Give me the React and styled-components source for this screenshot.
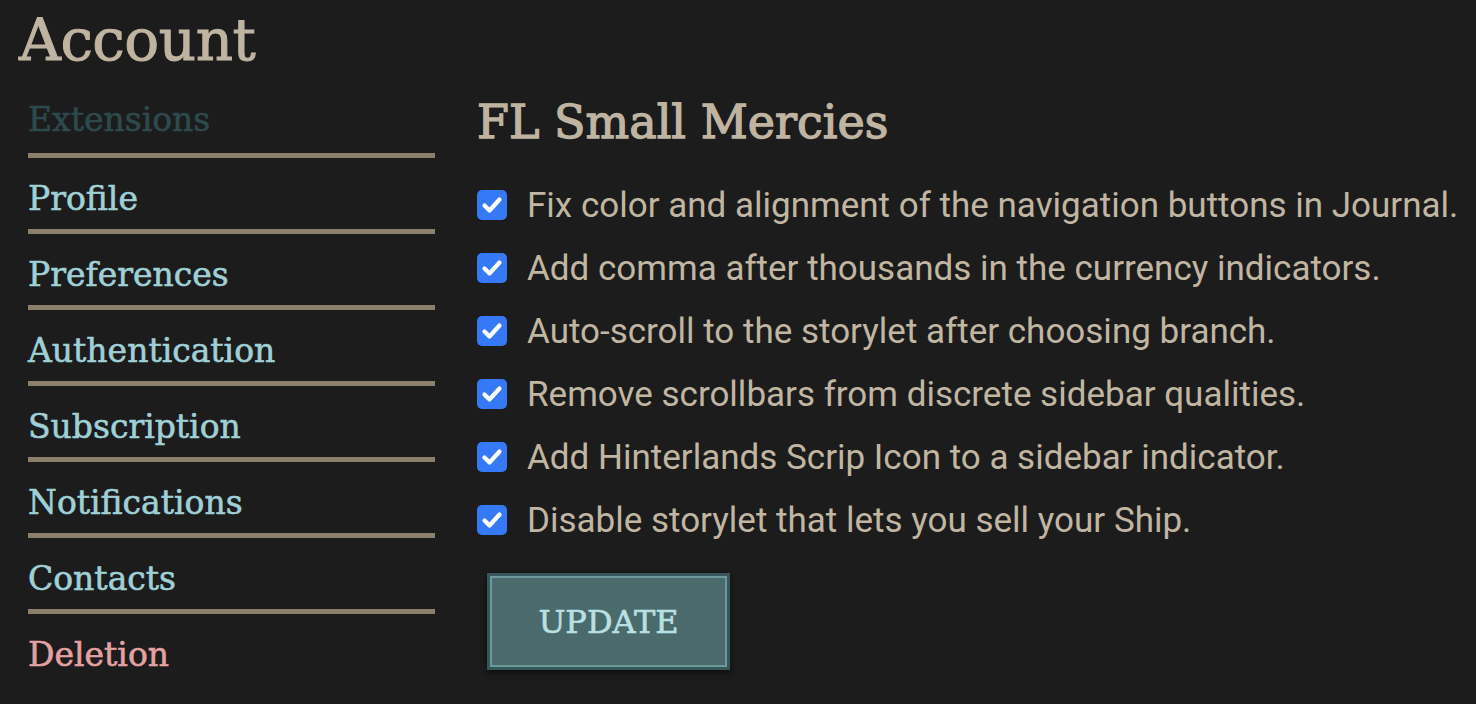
import React from "react";
import styled, { createGlobalStyle } from "styled-components";

const GlobalStyle = createGlobalStyle`
  body {
    margin: 0;
    background: #1c1c1c;
    font-family: "Roboto", "Liberation Sans", sans-serif;
  }
`;

const navItems = [
  { label: "Extensions", kind: "active" },
  { label: "Profile" },
  { label: "Preferences" },
  { label: "Authentication" },
  { label: "Subscription" },
  { label: "Notifications" },
  { label: "Contacts" },
  { label: "Deletion", kind: "danger" },
];

const options = [
  "Fix color and alignment of the navigation buttons in Journal.",
  "Add comma after thousands in the currency indicators.",
  "Auto-scroll to the storylet after choosing branch.",
  "Remove scrollbars from discrete sidebar qualities.",
  "Add Hinterlands Scrip Icon to a sidebar indicator.",
  "Disable storylet that lets you sell your Ship.",
];

const App = () => {
  return (
    <Page>
      <GlobalStyle />
      <Title>Account</Title>
      <Columns>
        <Sidebar>
          {navItems.map((item, i) => (
            <NavItem key={item.label} $kind={item.kind} $last={i === navItems.length - 1}>
              {item.label}
            </NavItem>
          ))}
        </Sidebar>
        <Main>
          <Heading>FL Small Mercies</Heading>
          <OptionList>
            {options.map((text) => (
              <Option key={text}>
                <CheckBox>
                  <svg width="30" height="30" viewBox="0 0 30 30">
                    <path d="M7.5 15.5 L12.5 20.5 L22.5 9.5" fill="none" stroke="#fff" strokeWidth="4.2" strokeLinecap="round" strokeLinejoin="round" />
                  </svg>
                </CheckBox>
                <OptionText>{text}</OptionText>
              </Option>
            ))}
          </OptionList>
          <UpdateButton>UPDATE</UpdateButton>
        </Main>
      </Columns>
    </Page>
  );
};

const Page = styled.div`
  padding: 4px 0 0 19px;
  color: #bfb4a1;
`;

const Title = styled.h1`
  margin: 0;
  font-family: "DejaVu Serif", "Liberation Serif", serif;
  font-weight: 400;
  font-size: 58px;
  line-height: 72px;
  color: #bfb4a1;
  letter-spacing: -0.5px;
  -webkit-text-stroke: 1px #bfb4a1;
`;

const Columns = styled.div`
  display: flex;
  gap: 42px;
  padding-left: 9px;
`;

const Sidebar = styled.nav`
  width: 407px;
  display: flex;
  flex-direction: column;
  padding-top: 24px;
`;

const navColor = (p) =>
  p.$kind === "active" ? "#2d4a4d" : p.$kind === "danger" ? "#e3a1a1" : "#9fd0d7";

const NavItem = styled.div`
  font-family: "DejaVu Serif", "Liberation Serif", serif;
  font-size: 33px;
  line-height: 40px;
  height: 50px;
  padding-top: 21px;
  color: ${navColor};
  -webkit-text-stroke: 0.6px ${navColor};
  border-bottom: ${(p) => (p.$last ? "none" : "5px solid #8c806c")};
  &:first-child {
    padding-top: 0;
    height: 53px;
  }
`;

const Main = styled.main`
  display: flex;
  flex-direction: column;
  padding-top: 18px;
`;

const Heading = styled.h2`
  margin: 0 0 40px;
  font-family: "DejaVu Serif", "Liberation Serif", serif;
  font-weight: 400;
  font-size: 46px;
  line-height: 56px;
  color: #bfb4a1;
  -webkit-text-stroke: 1.3px #bfb4a1;
`;

const OptionList = styled.div`
  display: flex;
  flex-direction: column;
  gap: 33px;
`;

const Option = styled.label`
  display: flex;
  align-items: center;
  gap: 20px;
  height: 30px;
`;

const CheckBox = styled.span`
  width: 30px;
  height: 30px;
  border-radius: 5px;
  background: #3579f6;
  display: flex;
  flex-shrink: 0;
`;

const OptionText = styled.span`
  font-family: "Roboto", "Liberation Sans", sans-serif;
  font-size: 35px;
  color: #c0b6a2;
  white-space: nowrap;
`;

const UpdateButton = styled.button`
  margin: 38px 0 0 10px;
  width: 243px;
  height: 97px;
  background: #4a6a6b;
  border: 3px solid #36565a;
  outline: 2px solid #6b9a9d;
  outline-offset: -5px;
  box-shadow: 0 2px 6px rgba(0, 0, 0, 0.6);
  font-family: "DejaVu Serif", "Liberation Serif", serif;
  font-size: 32px;
  color: #b9e0e4;
  -webkit-text-stroke: 0.6px #b9e0e4;
  cursor: pointer;
`;

export default App;
